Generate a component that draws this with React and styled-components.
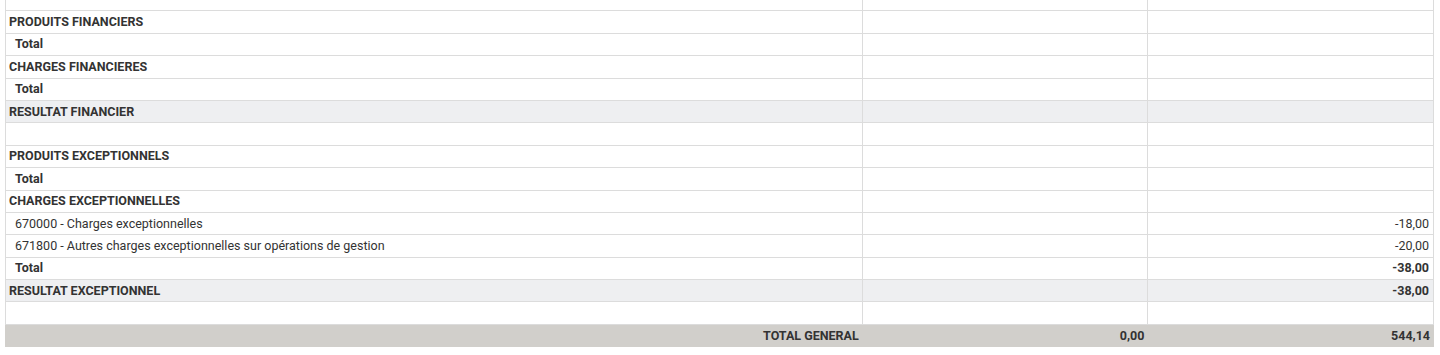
import React from 'react'
import styled, { createGlobalStyle } from 'styled-components'

const GlobalStyle = createGlobalStyle`
    body {
        margin: 0;
        background: #fff;
        font-family: Roboto, "Liberation Sans", sans-serif;
        color: #333;
    }
`

const rows = [
    { kind: 'blank' },
    { kind: 'section', label: 'PRODUITS FINANCIERS' },
    { kind: 'total', label: 'Total' },
    { kind: 'section', label: 'CHARGES FINANCIERES' },
    { kind: 'total', label: 'Total' },
    { kind: 'result', label: 'RESULTAT FINANCIER' },
    { kind: 'blank' },
    { kind: 'section', label: 'PRODUITS EXCEPTIONNELS' },
    { kind: 'total', label: 'Total' },
    { kind: 'section', label: 'CHARGES EXCEPTIONNELLES' },
    { kind: 'line', label: '670000 - Charges exceptionnelles', b: '-18,00' },
    { kind: 'line', label: '671800 - Autres charges exceptionnelles sur opérations de gestion', b: '-20,00' },
    { kind: 'total', label: 'Total', b: '-38,00' },
    { kind: 'result', label: 'RESULTAT EXCEPTIONNEL', b: '-38,00' },
    { kind: 'blank' },
]

const App = () => {
    return (
        <>
            <GlobalStyle />
            <Wrapper>
                <Table>
                    <colgroup>
                        <col style={{ width: '60%' }} />
                        <col style={{ width: '20%' }} />
                        <col style={{ width: '20%' }} />
                    </colgroup>
                    <tbody>
                        {rows.map((r, i) => (
                            <Row key={i} $kind={r.kind}>
                                <Label $kind={r.kind}>{r.label}</Label>
                                <Amount $kind={r.kind}>{r.a}</Amount>
                                <Amount $kind={r.kind}>{r.b}</Amount>
                            </Row>
                        ))}
                        <GrandRow>
                            <GrandCell>TOTAL GENERAL</GrandCell>
                            <GrandCell>0,00</GrandCell>
                            <GrandCell>544,14</GrandCell>
                        </GrandRow>
                    </tbody>
                </Table>
            </Wrapper>
        </>
    )
}

export default App

const Wrapper = styled.div`
    margin: -12px 6px 0 5px;
`
const Table = styled.table`
    width: 100%;
    border-collapse: collapse;
    table-layout: fixed;
    font-size: 12.5px;
`
const Row = styled.tr`
    height: 22.4px;
    background: ${p => (p.$kind === 'result' ? '#eeeff1' : '#fff')};
    td {
        border: 1px solid #dcdcdc;
        padding: 0 4px;
        line-height: 14px;
        white-space: nowrap;
    }
`
const Label = styled.td`
    font-weight: ${p => (p.$kind === 'line' ? 400 : 700)};
    padding-left: ${p => (p.$kind === 'total' || p.$kind === 'line' ? '9px' : '3px')} !important;
`
const Amount = styled.td`
    text-align: right;
    font-weight: ${p => (p.$kind === 'line' ? 400 : 700)};
`
const GrandRow = styled.tr`
    height: 22.4px;
    background: #d1cfcb;
`
const GrandCell = styled.td`
    border: 1px solid #d1cfcb;
    padding: 0 3px;
    text-align: right;
    font-weight: 700;
`
